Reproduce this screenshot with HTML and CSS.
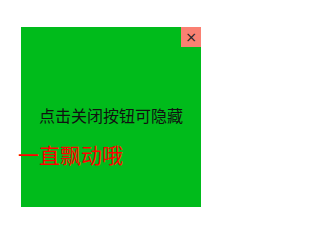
FILE: index.html
```html
<!DOCTYPE html>
<html>
<head>
<meta charset="utf-8">
<link rel="stylesheet" href="styles.css">
</head>
<body>
<div class="box">
  <div class="close">×</div>
  <p class="hint">点击关闭按钮可隐藏</p>
  <p class="float">一直飘动哦</p>
</div>
</body>
</html>
```
FILE: styles.css
```css
html, body {
  margin: 0;
  padding: 0;
  background: #fff;
}
body {
  font-family: "Noto Sans CJK SC", sans-serif;
}
.box {
  position: relative;
  margin: 27px 0 0 21px;
  width: 180px;
  height: 180px;
  background: #00bb1b;
  display: flex;
  flex-direction: column;
  box-sizing: border-box;
  padding-top: 76px;
}
.close {
  position: absolute;
  top: 0;
  right: 0;
  width: 20px;
  height: 20px;
  background: #fa8072;
  color: #222;
  font-family: "DejaVu Sans", sans-serif;
  font-size: 14px;
  line-height: 20px;
  text-align: center;
}
.hint {
  margin: 0 0 0 18px;
  font-size: 16px;
  line-height: 24px;
  color: #111;
  white-space: nowrap;
}
.float {
  margin: 12px 0 0 -3px;
  font-size: 21px;
  line-height: 30px;
  color: #ff0000;
  white-space: nowrap;
}
```
